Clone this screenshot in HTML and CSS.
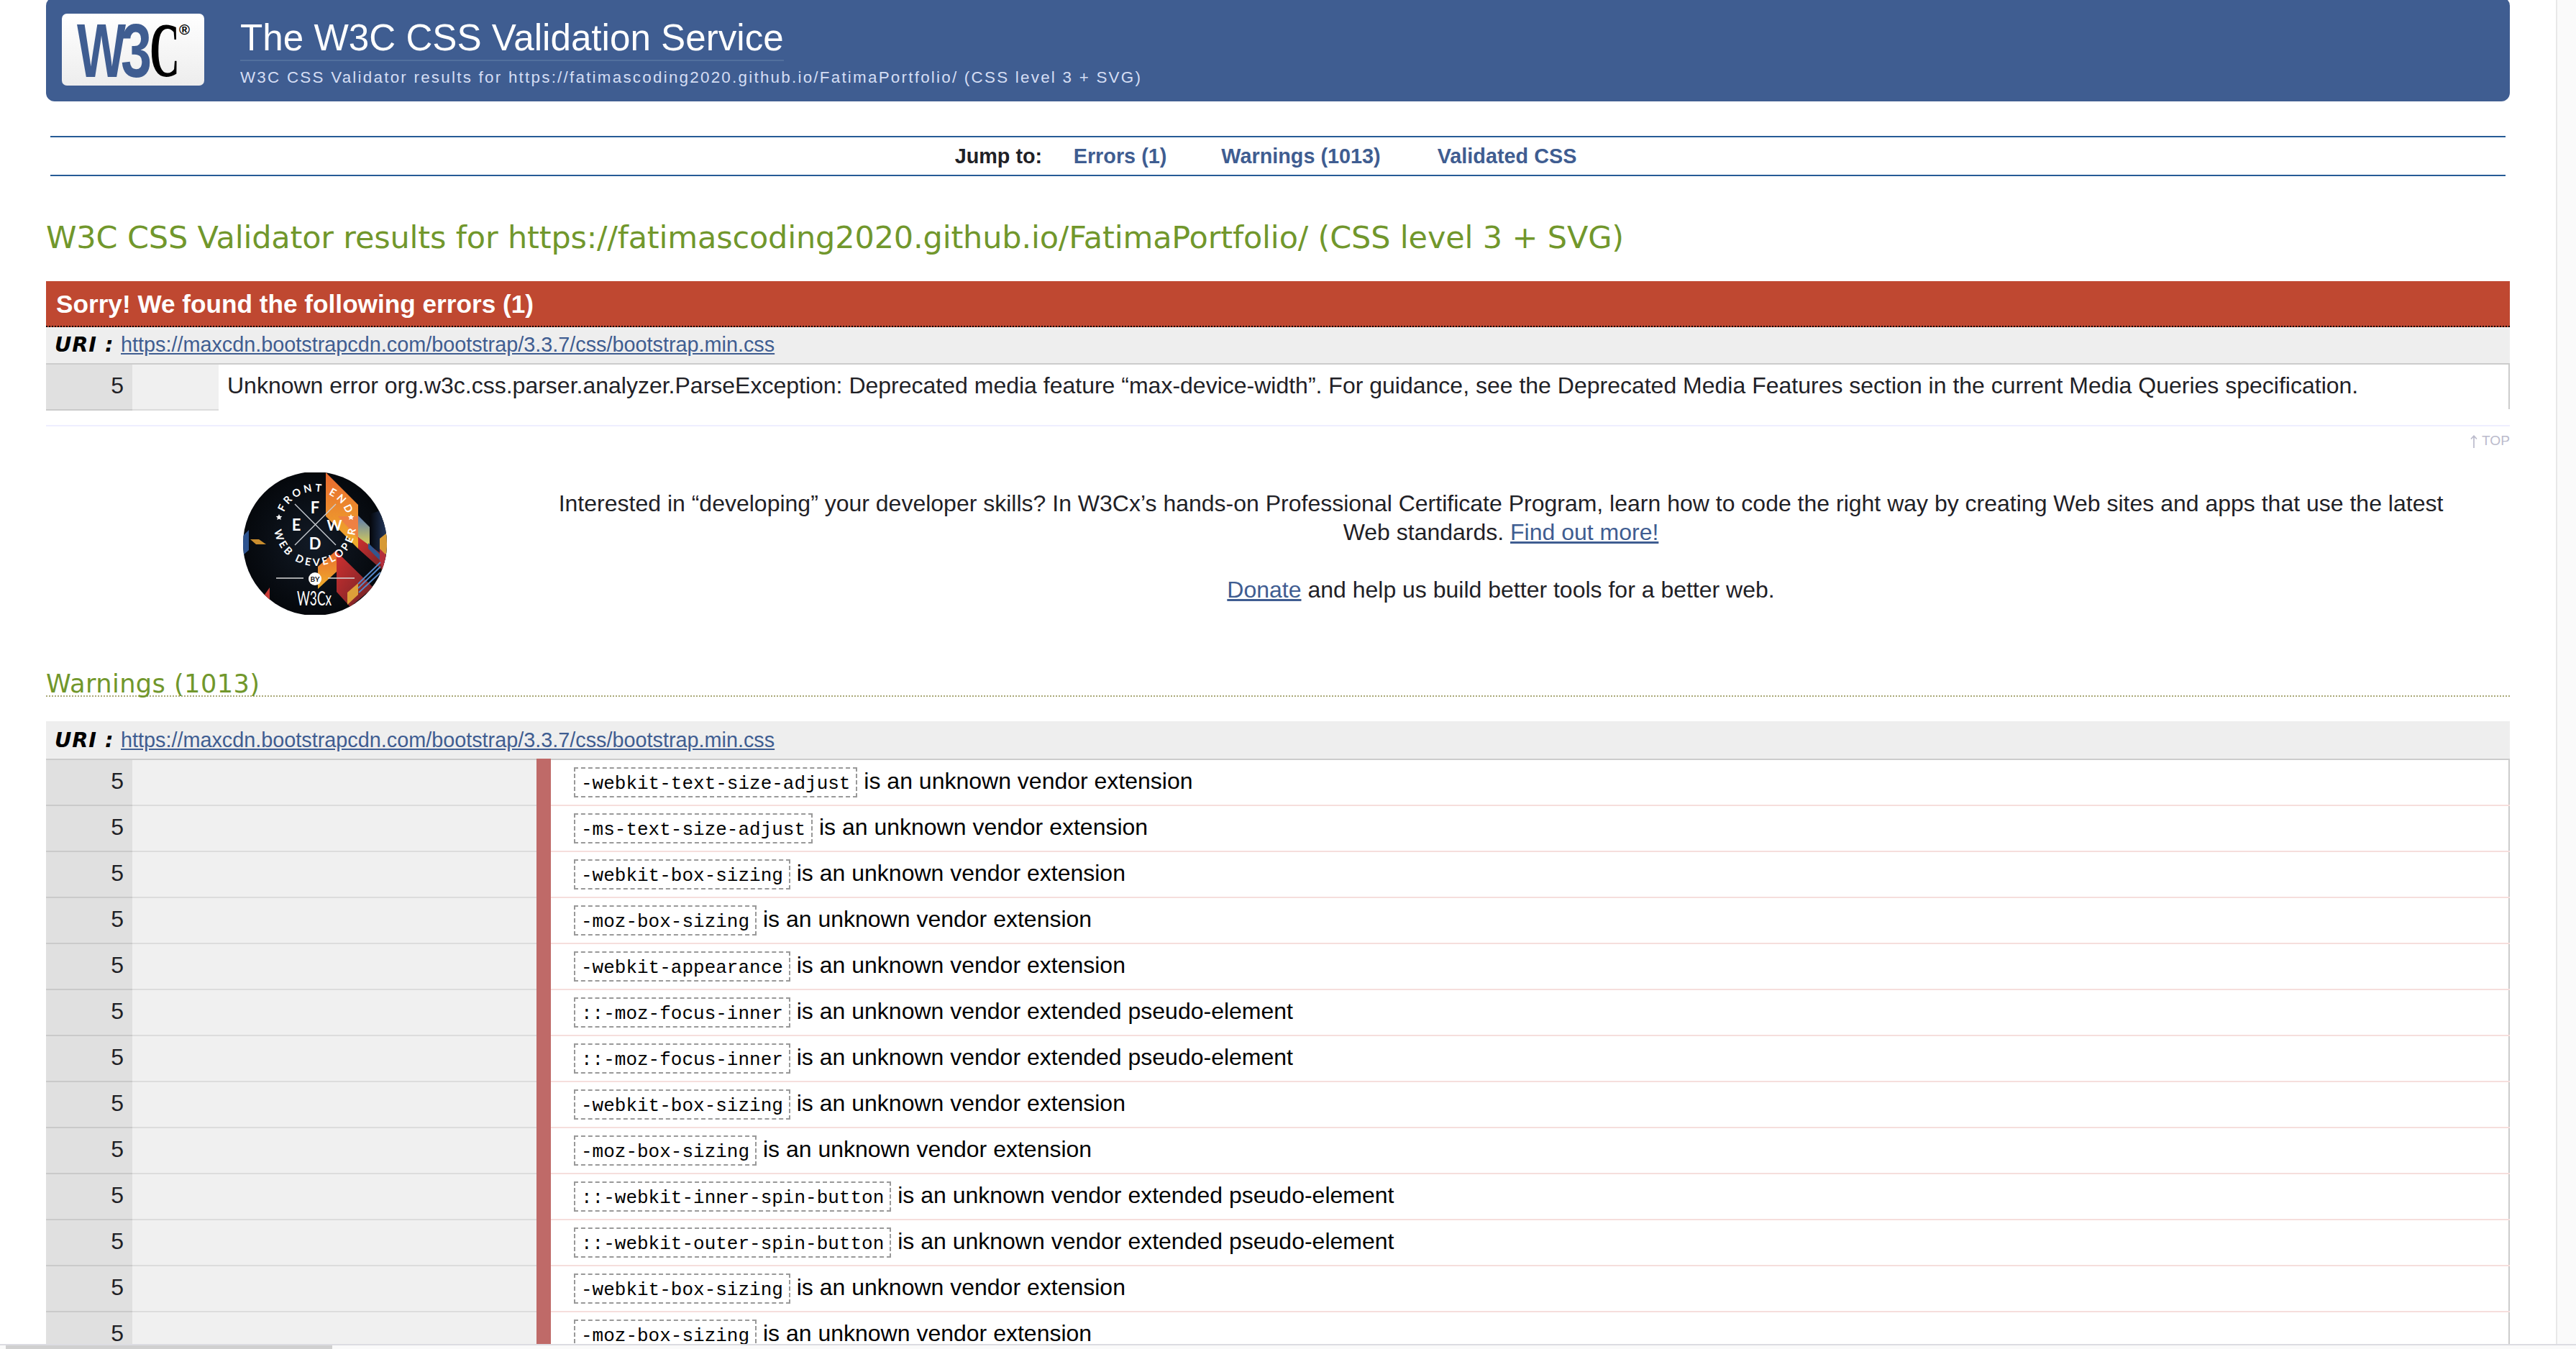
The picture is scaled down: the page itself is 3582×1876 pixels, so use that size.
FILE: index.html
```html
<!DOCTYPE html>
<html lang="en">
<head>
<meta charset="utf-8">
<title>W3C CSS Validator results</title>
<link rel="stylesheet" href="styles.css">
</head>
<body>
<div class="viewport">
<div class="page">
  <header class="banner">
    <svg class="logo" viewBox="0 0 198 100" role="img" aria-label="W3C">
      <defs><linearGradient id="plate" x1="0" y1="0" x2="0" y2="1"><stop offset="0" stop-color="#fff"/><stop offset="1" stop-color="#ededed"/></linearGradient></defs>
      <rect width="198" height="100" rx="7" fill="url(#plate)"/>
      <g font-family="Liberation Sans, sans-serif" font-size="105" fill="#3f5d91">
        <text x="21" y="88" textLength="68" lengthAdjust="spacingAndGlyphs" font-weight="bold">W</text>
        <text x="82" y="88" textLength="43" lengthAdjust="spacingAndGlyphs" font-weight="bold">3</text>
      </g>
      <text x="122" y="87" font-family="Liberation Serif, serif" font-size="109" font-weight="bold" textLength="42" lengthAdjust="spacingAndGlyphs">C</text>
      <text x="163" y="29" font-family="Liberation Sans, sans-serif" font-size="20" font-weight="bold" textLength="15" lengthAdjust="spacingAndGlyphs">®</text>
    </svg>
    <div class="titles">
      <h1 class="title">The W3C CSS Validation Service</h1>
      <p class="subtitle">W3C CSS Validator results for https://fatimascoding2020.github.io/FatimaPortfolio/ (CSS level 3 + SVG)</p>
    </div>
  </header>

  <nav class="jump">
    <strong class="jump-label">Jump to:</strong>
    <a class="jump-link" href="#errors">Errors (1)</a>
    <a class="jump-link" href="#warnings">Warnings (1013)</a>
    <a class="jump-link" href="#css">Validated CSS</a>
  </nav>

  <h2 class="results">W3C CSS Validator results for https://fatimascoding2020.github.io/FatimaPortfolio/ (CSS level 3 + SVG)</h2>

  <section id="errors">
    <h3 class="sorry">Sorry! We found the following errors (1)</h3>
    <h4 class="uri"><span class="uri-label">URI :</span><a href="#">https://maxcdn.bootstrapcdn.com/bootstrap/3.3.7/css/bootstrap.min.css</a></h4>
    <div class="row error">
      <div class="line">5</div><div class="context"></div>
      <div class="message">Unknown error org.w3c.css.parser.analyzer.ParseException: Deprecated media feature “max-device-width”. For guidance, see the Deprecated Media Features section in the current Media Queries specification.</div>
    </div>
    <p class="top"><svg class="arrow" viewBox="0 0 10 18"><path d="M5 1V18M1 5.5L5 1.2L9 5.5" fill="none" stroke="#bbbbcc" stroke-width="1.7"/></svg>TOP</p>
  </section>

  <section class="promo">
    <svg class="badge" viewBox="0 0 200 198" role="img" aria-label="Front End Web Developer by W3Cx">
      <defs>
        <clipPath id="disc"><circle cx="100" cy="99" r="100"/></clipPath>
        <radialGradient id="night"><stop offset="0" stop-color="#121a26"/><stop offset="1" stop-color="#05080c"/></radialGradient>
        <linearGradient id="flame" x1="0" y1="0" x2="0" y2="1"><stop offset="0" stop-color="#e8682f"/><stop offset="1" stop-color="#f0b02c"/></linearGradient>
        <linearGradient id="sky" x1="0" y1="0" x2="0" y2="1"><stop offset="0" stop-color="#5779b4"/><stop offset="1" stop-color="#e8d84a"/></linearGradient>
        <linearGradient id="ember" x1="0" y1="0" x2="1" y2="1"><stop offset="0" stop-color="#cf3030"/><stop offset="1" stop-color="#6b2226"/></linearGradient>
        <linearGradient id="fade" x1="0" y1="0" x2="1" y2="0"><stop offset="0" stop-color="#05070b"/><stop offset="1" stop-color="#22385f"/></linearGradient>
        <path id="arcTop" d="M53.5 73A46.5 46.5 0 0 1 146.5 73"/>
        <path id="arcBottom" d="M43 73A57 57 0 0 0 157 73"/>
      </defs>
      <g clip-path="url(#disc)">
        <rect width="200" height="198" fill="url(#night)"/>
        <path d="M176 58L200 50V130L176 105Z" fill="url(#fade)"/>
        <path d="M160 60L176 76V106L160 90Z" fill="url(#sky)"/>
        <path d="M160 90L196 116V138L160 106Z" fill="url(#ember)"/>
        <path d="M174 98L198 122V130L174 106Z" fill="#31578f"/>
        <path d="M115 0L160 45V106L115 61Z" fill="url(#flame)"/>
        <path d="M132 61H160V92Z" fill="#ed7a49" opacity=".8"/>
        <path d="M104 131L130 108V138L104 162Z" fill="url(#flame)"/>
        <path d="M130 110L181 160L149 187L130 166Z" fill="url(#ember)"/>
        <path d="M190 92L200 84V112L190 122Z" fill="#d79a35"/>
        <path d="M190 106L200 116V150L190 124Z" fill="#b52e3b"/>
        <path d="M145 167L160 154V170L145 184Z" fill="#dda03a"/>
        <path d="M160 155L191 125M160 161L191 131M161 167L191 139" stroke="#5588c8" stroke-width="2"/>
        <path d="M10 93H22L32 100H18Z" fill="#c98d2e"/>
        <path d="M0 88L8 80V108L0 115Z" fill="#2d538f"/>
        <path d="M30 170L37 160V180Z" fill="#c93a36"/>
      </g>
      <path d="M72 44L129 101M129 44L72 101" stroke="#c9cdd2" stroke-width="1.4"/>
      <path d="M46 147H84M118 147H155" stroke="#d8d8d8" stroke-width="1.5"/>
      <g fill="#fff" font-family="Lato, sans-serif" font-weight="bold">
        <g font-size="14.5">
          <text><textPath href="#arcTop" startOffset="18" textLength="112">FRONT END</textPath></text>
          <text><textPath href="#arcBottom" startOffset="8" textLength="165">WEB DEVELOPER</textPath></text>
        </g>
        <g font-size="22" text-anchor="middle">
          <text x="100" y="57">F</text><text x="74" y="81">E</text><text x="127" y="81" font-size="20">W</text><text x="100" y="107">D</text>
        </g>
        <circle cx="100" cy="148" r="9"/>
        <text x="100" y="152" font-size="10" text-anchor="middle" fill="#111">BY</text>
        <text x="75" y="185" font-size="27" font-weight="normal" textLength="48" lengthAdjust="spacingAndGlyphs">W3Cx</text>
      </g>
      <path d="M50 58l1.3 2.8 3 .3-2.2 2 .6 3-2.7-1.5-2.7 1.5.6-3-2.2-2 3-.3zM150 58l1.3 2.8 3 .3-2.2 2 .6 3-2.7-1.5-2.7 1.5.6-3-2.2-2 3-.3z" fill="#fff"/>
    </svg>
    <div class="promo-text">
      <p>Interested in “developing” your developer skills? In W3Cx’s hands-on Professional Certificate Program, learn how to code the right way by creating Web sites and apps that use the latest Web standards. <a href="#">Find out more!</a></p>
      <p><a href="#">Donate</a> and help us build better tools for a better web.</p>
    </div>
  </section>

  <section id="warnings">
    <h3 class="warnings-title">Warnings (1013)</h3>
    <h4 class="uri uri-tall"><span class="uri-label">URI :</span><a href="#">https://maxcdn.bootstrapcdn.com/bootstrap/3.3.7/css/bootstrap.min.css</a></h4>
    <div class="warning-list">
      <div class="row warning"><div class="line">5</div><div class="context"></div><div class="message"><code>-webkit-text-size-adjust</code> is an unknown vendor extension</div></div>
      <div class="row warning"><div class="line">5</div><div class="context"></div><div class="message"><code>-ms-text-size-adjust</code> is an unknown vendor extension</div></div>
      <div class="row warning"><div class="line">5</div><div class="context"></div><div class="message"><code>-webkit-box-sizing</code> is an unknown vendor extension</div></div>
      <div class="row warning"><div class="line">5</div><div class="context"></div><div class="message"><code>-moz-box-sizing</code> is an unknown vendor extension</div></div>
      <div class="row warning"><div class="line">5</div><div class="context"></div><div class="message"><code>-webkit-appearance</code> is an unknown vendor extension</div></div>
      <div class="row warning"><div class="line">5</div><div class="context"></div><div class="message"><code>::-moz-focus-inner</code> is an unknown vendor extended pseudo-element</div></div>
      <div class="row warning"><div class="line">5</div><div class="context"></div><div class="message"><code>::-moz-focus-inner</code> is an unknown vendor extended pseudo-element</div></div>
      <div class="row warning"><div class="line">5</div><div class="context"></div><div class="message"><code>-webkit-box-sizing</code> is an unknown vendor extension</div></div>
      <div class="row warning"><div class="line">5</div><div class="context"></div><div class="message"><code>-moz-box-sizing</code> is an unknown vendor extension</div></div>
      <div class="row warning"><div class="line">5</div><div class="context"></div><div class="message"><code>::-webkit-inner-spin-button</code> is an unknown vendor extended pseudo-element</div></div>
      <div class="row warning"><div class="line">5</div><div class="context"></div><div class="message"><code>::-webkit-outer-spin-button</code> is an unknown vendor extended pseudo-element</div></div>
      <div class="row warning"><div class="line">5</div><div class="context"></div><div class="message"><code>-webkit-box-sizing</code> is an unknown vendor extension</div></div>
      <div class="row warning"><div class="line">5</div><div class="context"></div><div class="message"><code>-moz-box-sizing</code> is an unknown vendor extension</div></div>
    </div>
  </section>
</div>
<div class="scroll-track"></div>
</div>
<div class="bottom-bar"><div class="bottom-thumb"></div></div>
</body>
</html>
```
FILE: styles.css
```css
* { box-sizing: border-box; }
html, body { margin: 0; height: 100%; overflow: hidden; }
body {
  display: flex;
  flex-direction: column;
  background: #fff;
  color: #1f2126;
  font: 32px/40px "Liberation Sans", Arial, sans-serif;
}
h1, h2, h3, h4, p { margin: 0; font-weight: normal; }
a { color: #3f5d91; }

.viewport { display: flex; flex: none; height: 1869px; overflow: hidden; }
.page { flex: 1; padding: 0 64px; overflow: hidden; }
.scroll-track { width: 28px; border-left: 2px solid #e8e8e8; background: #fafafa; }

.banner {
  display: flex;
  height: 145px;
  margin-top: -4px;
  padding: 23px 22px 0;
  border-radius: 12px;
  background: #3f5d91;
}
.logo { width: 198px; height: 100px; margin-right: 50px; }
.titles { padding-top: 4px; }
.title {
  width: max-content;
  border-bottom: 2px solid #52709d;
  color: #fff;
  font-size: 51.2px;
  line-height: 60px;
}
.subtitle {
  padding-top: 8px;
  color: #d5def4;
  font-size: 22.4px;
  line-height: 30px;
  letter-spacing: 2.24px;
}

.jump {
  display: flex;
  justify-content: center;
  height: 56px;
  margin: 48px 6px 0;
  padding-right: 34px;
  border: solid #265b96;
  border-width: 2px 0;
  font-size: 28.8px;
  font-weight: bold;
  line-height: 52px;
}
.jump-link { margin-left: 76px; text-decoration: none; }
.jump-label + .jump-link { margin-left: 43.5px; }
.jump-link:last-child { margin-left: 79px; }

.results, .warnings-title { color: #71972c; font-family: "DejaVu Sans", Verdana, sans-serif; }
.results { height: 146px; padding-top: 55px; font-size: 43px; line-height: 60px; letter-spacing: -0.165px; }

.sorry {
  height: 64px;
  padding-left: 14px;
  border-bottom: 2px dotted #000;
  background: #bf4831;
  color: #fff;
  font-size: 35.2px;
  font-weight: bold;
  line-height: 64px;
}
.uri {
  display: flex;
  height: 52px;
  padding-left: 12px;
  border-bottom: 2px solid #ccc;
  background: #eee;
  font-size: 28.8px;
  line-height: 49px;
}
.uri-label {
  width: 92px;
  color: #000;
  font-family: "DejaVu Sans", Verdana, sans-serif;
  font-weight: bold;
  font-style: italic;
  letter-spacing: 0.9px;
  white-space: nowrap;
}
.uri-tall { height: 54px; margin-top: 34px; line-height: 52px; }

.row { display: flex; height: 64px; }
.row > div { padding-top: 9px; border-bottom: 2px solid #dcdcdc; }
.row > .line { width: 120px; padding-right: 12px; border-color: #cacaca; background: #e0e0e0; text-align: right; }
.context { width: 120px; background: #f0f0f0; }
.row > .message {
  flex: 1;
  padding-left: 12px;
  background: linear-gradient(#ccc, #ccc) right top / 2px 62px no-repeat;
  white-space: nowrap;
}
.error > .message { border-color: transparent; }
.top {
  height: 64px;
  margin-top: 20px;
  border-top: 2px solid #eef;
  color: #bbc;
  font-size: 19.2px;
  line-height: 39px;
  text-align: right;
}
.arrow { width: 10px; height: 18px; margin-right: 6px; vertical-align: -4px; }

.promo { display: flex; height: 280px; padding-top: 2px; }
.badge { width: 200px; height: 198px; margin-left: 274px; }
.promo-text { flex: 1; margin-left: 146px; padding: 23px 84px 0; text-align: center; }
.promo-text p { margin-bottom: 40px; }

.warnings-title {
  height: 34px;
  border-bottom: 2px dotted #a9a878;
  font-size: 35.2px;
  line-height: 32px;
  letter-spacing: 0.42px;
}
.warning .context { width: 562px; }
.warning > .message { padding-left: 52px; border-color: #f6dedc; color: #000; }

/* Severity stripe runs over the row borders */
.warning-list { position: relative; }
.warning-list::before {
  content: "";
  position: absolute;
  top: -2px;
  bottom: 0;
  left: 682px;
  width: 20px;
  background: #bf6a68;
}
code {
  padding: 6px 8px 2px;
  border: 2px dashed #999;
  font: 26px "Liberation Mono", "Courier New", monospace;
}

.bottom-bar { height: 7px; padding-left: 8px; border-top: 2px solid #dcdce2; background: #fafafa; }
.bottom-thumb { width: 454px; height: 5px; background: #d0d0d0; }
```
